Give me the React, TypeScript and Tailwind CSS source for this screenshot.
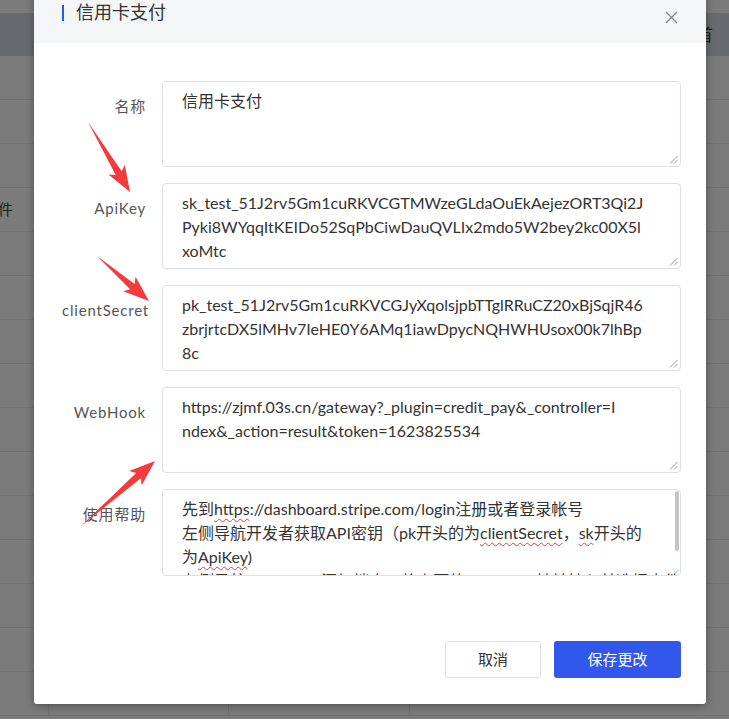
import React from "react";

const API_KEY = [
  "sk_test_51J2rv5Gm1cuRKVCGTMWzeGLdaOuEkAejezORT3Qi2J",
  "Pyki8WYqqItKEIDo52SqPbCiwDauQVLIx2mdo5W2bey2kc00X5l",
  "xoMtc",
];

const CLIENT_SECRET = [
  "pk_test_51J2rv5Gm1cuRKVCGJyXqolsjpbTTglRRuCZ20xBjSqjR46",
  "zbrjrtcDX5lMHv7IeHE0Y6AMq1iawDpycNQHWHUsox00k7lhBp",
  "8c",
];

const WEBHOOK = [
  "https://zjmf.03s.cn/gateway?_plugin=credit_pay&_controller=I",
  "ndex&_action=result&token=1623825534",
];

function ResizeHandle() {
  return (
    <svg className="absolute bottom-[2px] right-[2px]" width="9" height="9" viewBox="0 0 9 9">
      <path d="M8.5 1 L1 8.5 M8.5 5 L5 8.5" stroke="#9a9a9a" strokeWidth="1" fill="none" />
    </svg>
  );
}

function Box({ children }: { children: React.ReactNode }) {
  return (
    <div className="relative h-[86px] flex-1 overflow-hidden rounded-[4px] border border-[#dcdfe6] bg-white pl-[19px] pt-[7px] text-[16px] leading-[24px] text-[#333]">
      {children}
      <ResizeHandle />
    </div>
  );
}

function Lines({ lines }: { lines: string[] }) {
  return (
    <>
      {lines.map((l) => (
        <div key={l} className="whitespace-nowrap">
          {l}
        </div>
      ))}
    </>
  );
}

function Row({ label, children }: { label: string; children: React.ReactNode }) {
  return (
    <div className="flex gap-[16px]">
      <div className="w-[84px] shrink-0 pt-[15px] text-right text-[15px] leading-[20px] tracking-[0.8px] text-[#555]">
        {label}
      </div>
      {children}
    </div>
  );
}

const squiggle = "underline decoration-wavy decoration-[#e5403a] decoration-1 underline-offset-[3px]";

function Arrow({ x1, y1, x2, y2 }: { x1: number; y1: number; x2: number; y2: number }) {
  const dx = x2 - x1;
  const dy = y2 - y1;
  const L = Math.hypot(dx, dy);
  const a = (Math.atan2(dy, dx) * 180) / Math.PI;
  const pts = `0,0 ${L - 22},-3.5 ${L - 26},-9.5 ${L},0 ${L - 26},9.5 ${L - 22},3.5`;
  return <polygon points={pts} fill="#f33b3b" transform={`translate(${x1} ${y1}) rotate(${a})`} />;
}

export default function App() {
  return (
    <div className="relative h-[719px] w-[729px] overflow-hidden bg-[#7b7b7b] font-[Lato,'Noto_Sans_CJK_SC',sans-serif]">
      {/* page behind the overlay */}
      <div className="pt-[13px]">
        <div className="flex h-[43px] items-center justify-end bg-[#696a6d]">
          <span className="mr-[16px] text-[17px] text-[#1e1e1e]">首</span>
        </div>
        {Array.from({ length: 15 }).map((_, i) => (
          <div key={i} className="grid h-[44px] grid-cols-[49px_180px_181px_1fr] border-b border-[#717171]">
            <div className="flex items-center border-r border-[#717171] text-[15px] text-[#1e1e1e]">
              {i === 3 && <span className="-ml-[2px]">件</span>}
            </div>
            <div className="border-r border-[#717171]" />
            <div className="border-r border-[#717171]" />
            <div />
          </div>
        ))}
      </div>

      {/* modal */}
      <div className="absolute left-[34px] top-[-18px] flex h-[722px] w-[672px] flex-col rounded-[3px] bg-white shadow-[0_2px_8px_rgba(0,0,0,0.35)]">
        <div className="flex h-[61px] items-center justify-between bg-[#f4f5f7] pl-[28px] pr-[28px]">
          <div className="flex items-center gap-[12px]">
            <span className="h-[16px] w-[2px] bg-[#3158eb]" />
            <span className="text-[18px] text-[#333]">信用卡支付</span>
          </div>
          <button className="mt-[9px] text-[#8a8a8a]">
            <svg width="13" height="13" viewBox="0 0 13 13">
              <path d="M1 1 L12 12 M12 1 L1 12" stroke="currentColor" strokeWidth="1.4" fill="none" />
            </svg>
          </button>
        </div>

        <div className="flex flex-col gap-[16px] pl-[28px] pr-[25px] pt-[38px]">
          <Row label="名称">
            <Box>信用卡支付</Box>
          </Row>
          <Row label="ApiKey">
            <Box>
              <Lines lines={API_KEY} />
            </Box>
          </Row>
          <Row label="clientSecret">
            <Box>
              <Lines lines={CLIENT_SECRET} />
            </Box>
          </Row>
          <Row label="WebHook">
            <Box>
              <Lines lines={WEBHOOK} />
            </Box>
          </Row>
          <Row label="使用帮助">
            <div className="relative h-[87px] flex-1 overflow-hidden rounded-[4px] border border-[#dcdfe6] bg-white pl-[19px] pt-[7px] text-[16px] leading-[24px] text-[#333]">
              <div className="whitespace-nowrap">
                先到<span className={squiggle}>https</span>://dashboard.stripe.com/login注册或者登录帐号
              </div>
              <div className="whitespace-nowrap">
                左侧导航开发者获取API密钥（pk开头的为<span className={squiggle}>clientSecret</span>，
                <span className={squiggle}>sk</span>开头的
              </div>
              <div className="whitespace-nowrap">
                为<span className={squiggle}>ApiKey</span>)
              </div>
              <div className="whitespace-nowrap">左侧导航Webhooks添加端点，将上面的WebHook地址填入并选择事件</div>
              <span className="absolute right-[1px] top-[1px] h-[60px] w-[4px] rounded-[2px] bg-[#c4c4c4]" />
              <svg className="absolute bottom-[1px] right-[1px]" width="5" height="5" viewBox="0 0 5 5">
                <path d="M4.5 1 L1 4.5" stroke="#b0b0b0" strokeWidth="1" fill="none" />
              </svg>
            </div>
          </Row>
        </div>

        <div className="mt-[65px] flex justify-end gap-[13px] pr-[25px]">
          <button className="h-[37px] w-[96px] rounded-[3px] border border-[#dcdfe6] bg-white text-[15px] text-[#333]">
            取消
          </button>
          <button className="h-[37px] w-[127px] rounded-[3px] bg-[#3158eb] text-[15px] text-white">保存更改</button>
        </div>
      </div>

      {/* annotation arrows */}
      <svg className="pointer-events-none absolute inset-0" width="729" height="719">
        <Arrow x1={88} y1={122} x2={130} y2={192} />
        <Arrow x1={97} y1={256} x2={149} y2={301} />
        <Arrow x1={80} y1={527} x2={155} y2={461} />
      </svg>
    </div>
  );
}
